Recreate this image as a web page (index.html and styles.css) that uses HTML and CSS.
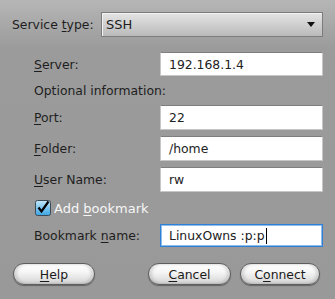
FILE: index.html
```html
<!DOCTYPE html>
<html lang="en">
<head>
    <meta charset="UTF-8">
    <meta name="viewport" content="width=device-width, initial-scale=1.0">
    <title>Connect to Server</title>
    <link rel="stylesheet" href="styles.css">
</head>
<body>

    <div class="dialog">
        <div class="service-row">
            <span class="service-label">Service <u>t</u>ype:</span>
            <div class="combo">
                <span class="combo-text">SSH</span>
                <svg class="combo-arrow" width="8" height="5" viewBox="0 0 8 5">
                    <path d="M0 0 L8 0 L4 5 Z" fill="#111"/>
                </svg>
            </div>
        </div>

        <div class="fields">
            <div class="field-row row-server">
                <span class="field-label"><u>S</u>erver:</span>
                <div class="entry">192.168.1.4</div>
            </div>

            <div class="optional">Optional information:</div>

            <div class="field-row row-tall">
                <span class="field-label"><u>P</u>ort:</span>
                <div class="entry">22</div>
            </div>

            <div class="field-row row-tall">
                <span class="field-label"><u>F</u>older:</span>
                <div class="entry">/home</div>
            </div>

            <div class="field-row row-tall">
                <span class="field-label"><u>U</u>ser Name:</span>
                <div class="entry">rw</div>
            </div>

            <label class="check-row">
                <svg class="check-box" width="16" height="16" viewBox="0 0 16 16">
                    <defs>
                        <linearGradient id="boxFill" x1="0" y1="0" x2="0" y2="1">
                            <stop offset="0" stop-color="#c4e8fb"/>
                            <stop offset="1" stop-color="#38a4e3"/>
                        </linearGradient>
                    </defs>
                    <rect x="0.5" y="0.5" width="15" height="15" rx="2" fill="url(#boxFill)" stroke="#3b4a55"/>
                    <path d="M3.5 7.5 L6.5 11.5 L13.5 1.5" fill="none" stroke="#000" stroke-width="2.2"/>
                </svg>
                <span class="check-text">Add <u>b</u>ookmark</span>
            </label>

            <div class="field-row row-bookmark">
                <span class="field-label">Bookmark <u>n</u>ame:</span>
                <div class="entry focused">LinuxOwns :p:p<span class="caret"></span></div>
            </div>
        </div>

        <div class="buttons">
            <button class="pill-btn btn-help"><u>H</u>elp</button>
            <div class="btn-group">
                <button class="pill-btn btn-cancel"><u>C</u>ancel</button>
                <button class="pill-btn btn-connect">C<u>o</u>nnect</button>
            </div>
        </div>
    </div>

</body>
</html>
```

FILE: styles.css
```css
body {
    margin: 0;
    font-family: 'DejaVu Sans', sans-serif;
    font-size: 12.4px;
    color: #1e1e1e;
    background: linear-gradient(to bottom, #b6b6b6 0, #9b9b9b 48px, #999999 100%);
    height: 299px;
    overflow: hidden;
}

u {
    text-decoration-thickness: 1px;
    text-underline-offset: 2px;
}

.dialog {
    padding: 12px 12px 0 12px;
}

/* top combo row */
.service-row {
    display: flex;
    align-items: center;
    height: 25px;
}

.service-label {
    width: 89px;
    flex-shrink: 0;
}

.combo {
    flex: 1;
    height: 25px;
    box-sizing: border-box;
    display: flex;
    align-items: center;
    justify-content: space-between;
    padding: 0 7px 0 4px;
    border: 1px solid #7c7c7c;
    background: linear-gradient(to bottom, #e4e4e4, #bababa);
    box-shadow: inset 1px 1px 0 #f2f2f2;
}

.combo-text {
    font-size: 13px;
}

/* form fields */
.fields {
    padding-left: 22px;
    margin-top: 15px;
}

.field-row {
    display: grid;
    grid-template-columns: 126px 163px;
    align-items: center;
}

.row-server {
    height: 24px;
}

.row-tall {
    height: 25px;
    margin-top: 6px;
}

.row-tall:first-of-type {
    margin-top: 0;
}

.optional {
    height: 17px;
    line-height: 17px;
    margin: 6px 0;
}

.entry {
    height: 100%;
    box-sizing: border-box;
    display: flex;
    align-items: center;
    padding-left: 8px;
    background: #ffffff;
    border: 1px solid #c6c6c6;
    border-top-color: #7e7e7e;
    color: #222;
}

.entry.focused {
    border: 1px solid #2f7fd6;
    box-shadow: inset 0 0 0 1px #8cbdeb;
}

.caret {
    display: inline-block;
    width: 1px;
    height: 16px;
    background: #000;
    margin-left: 1px;
}

.check-row {
    display: flex;
    align-items: center;
    height: 16px;
    margin-top: 8px;
    margin-left: 1px;
}

.check-box {
    flex-shrink: 0;
}

.check-text {
    margin-left: 3px;
    font-size: 13px;
    color: #f6f6f6;
}

.row-bookmark {
    height: 23px;
    margin-top: 8px;
}

/* bottom buttons */
.buttons {
    display: flex;
    justify-content: space-between;
    margin-top: 16px;
    padding: 0 3px 0 1px;
}

.btn-group {
    display: flex;
    gap: 9px;
}

.pill-btn {
    height: 22px;
    border-radius: 11px;
    border: 1px solid #5e5e5e;
    background: linear-gradient(to bottom, #ffffff 0%, #f6f6f6 40%, #e2e2e2 75%, #d0d0d0 100%);
    box-shadow: inset 3px 0 3px rgba(0, 0, 0, 0.12), inset -3px 0 3px rgba(0, 0, 0, 0.12), 0 1px 1px rgba(0, 0, 0, 0.35);
    font-family: 'DejaVu Sans', sans-serif;
    font-size: 12.4px;
    color: #1a1a1a;
    padding: 0;
    cursor: pointer;
}

.btn-help {
    width: 82px;
}

.btn-cancel {
    width: 83px;
}

.btn-connect {
    width: 80px;
}
```
